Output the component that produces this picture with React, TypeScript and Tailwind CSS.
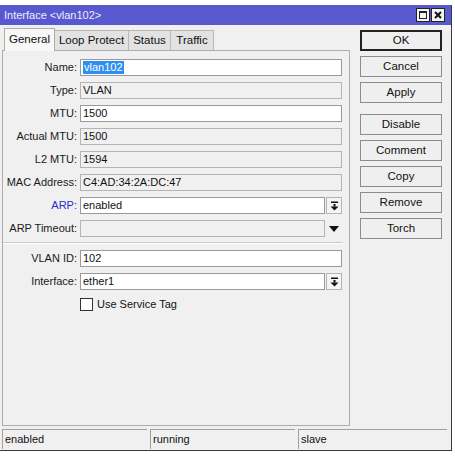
import React from 'react';

const font = { fontFamily: '"Liberation Sans", Arial, sans-serif' };

function DropIcon() {
  return (
    <svg width="9" height="10" viewBox="0 0 9 10" className="fill-[#111]">
      <rect x="1" y="0.5" width="7" height="1.5" />
      <rect x="3.5" y="3" width="2" height="2.5" />
      <polygon points="0.5,5.5 8.5,5.5 4.5,9.5" />
    </svg>
  );
}

function Field({
  label,
  value,
  editable,
  selected,
  blue,
  drop,
  arrow,
}: {
  label: string;
  value: string;
  editable?: boolean;
  selected?: boolean;
  blue?: boolean;
  drop?: boolean;
  arrow?: boolean;
}) {
  return (
    <div className="flex items-center h-[17px] mb-[6px]">
      <div className={`w-[77px] pr-[3px] text-right text-[11px] ${blue ? 'text-[#2b2bd0]' : 'text-[#1a1a1a]'}`}>
        {label}:
      </div>
      <div
        className={`h-[17px] flex items-center px-[2px] text-[11px] text-[#111] border ${
          editable ? 'bg-white border-[#9a9a9a]' : 'bg-[#f0f0f0] border-[#b4b4b4]'
        } ${drop || arrow ? 'w-[245px]' : 'w-[262px]'}`}
      >
        {selected ? <span className="bg-[#2f8ff0] text-white px-[1px] leading-[13px]">{value}</span> : value}
      </div>
      {drop && (
        <div className="ml-[1px] w-[16px] h-[17px] bg-[#f4f4f4] border border-[#b4b4b4] flex items-center justify-center">
          <DropIcon />
        </div>
      )}
      {arrow && (
        <div className="ml-[1px] w-[16px] h-[17px] flex items-center justify-center">
          <svg width="10" height="6" viewBox="0 0 10 6" className="fill-[#111]">
            <polygon points="0,0 10,0 5,6" />
          </svg>
        </div>
      )}
    </div>
  );
}

function Btn({ label, primary, extra }: { label: string; primary?: boolean; extra?: string }) {
  return (
    <div
      className={`w-[82px] h-[21px] flex items-center justify-center text-[11.5px] text-[#111] bg-[#efefef] ${
        primary ? 'border-2 border-[#222]' : 'border border-[#8c8c8c]'
      } ${extra ?? 'mb-[5px]'}`}
    >
      {label}
    </div>
  );
}

export default function App() {
  const tabs = [
    { name: 'Loop Protect', w: 'w-[75px]' },
    { name: 'Status', w: 'w-[43px]' },
    { name: 'Traffic', w: 'w-[44px]' },
  ];
  return (
    <div className="w-[455px] h-[456px] bg-white overflow-hidden" style={font}>
      <div className="h-[5px]" />
      <div className="w-[452px] h-[446px] flex flex-col bg-[#f0f0f0] border-r border-b border-[#3a3a3a]">
        {/* title bar */}
        <div className="h-[20px] bg-[#5858cf] flex items-center pl-[4px] pr-[6px]">
          <span className="text-[11px] text-[#eeeeff] flex-1">Interface &lt;vlan102&gt;</span>
          <div className="w-[14px] h-[14px] bg-[#f4f4f4] border border-[#222] flex items-center justify-center">
            <div className="w-[8px] h-[8px] border border-[#222] border-t-2" />
          </div>
          <div className="ml-[1px] w-[14px] h-[14px] bg-[#f4f4f4] border border-[#222] flex items-center justify-center">
            <svg width="8" height="8" viewBox="0 0 8 8" className="stroke-[#111]" strokeWidth="2">
              <path d="M1 1 L7 7 M7 1 L1 7" />
            </svg>
          </div>
        </div>

        {/* body */}
        <div className="flex pt-[3px]">
          <div className="ml-[2px] w-[348px]">
            <div className="flex items-end h-[22px] pl-[2px]">
              <div className="w-[51px] h-[23px] bg-[#f7f7f7] border border-b-0 border-[#adadad] flex items-center justify-center text-[11.5px] text-[#111] relative z-10 -mb-px">
                General
              </div>
              {tabs.map((t) => (
                <div
                  key={t.name}
                  className={`${t.w} h-[20px] bg-[#e2e2e2] border border-b-0 border-[#b8b8b8] -ml-px first:ml-0 flex items-center justify-center text-[11.5px] text-[#111]`}
                >
                  {t.name}
                </div>
              ))}
            </div>
            <div className="h-[376px] border border-[#adadad] bg-[#f0f0f0] pt-[8px]">
              <Field label="Name" value="vlan102" editable selected />
              <Field label="Type" value="VLAN" />
              <Field label="MTU" value="1500" editable />
              <Field label="Actual MTU" value="1500" />
              <Field label="L2 MTU" value="1594" />
              <Field label="MAC Address" value="C4:AD:34:2A:DC:47" />
              <Field label="ARP" value="enabled" editable blue drop />
              <Field label="ARP Timeout" value="" arrow />
              <div className="w-[340px] h-[2px] border-t border-[#c8c8c8] border-b border-b-white -mt-[1px] mb-[6px]" />
              <Field label="VLAN ID" value="102" editable />
              <Field label="Interface" value="ether1" editable drop />
              <div className="flex items-center h-[17px] pl-[77px] mt-[3px]">
                <div className="w-[13px] h-[13px] bg-white border border-[#333]" />
                <span className="ml-[4px] text-[11px] text-[#111]">Use Service Tag</span>
              </div>
            </div>
          </div>
          <div className="ml-[10px] pt-[2px]">
            <Btn label="OK" primary />
            <Btn label="Cancel" />
            <Btn label="Apply" extra="mb-[11px]" />
            <Btn label="Disable" />
            <Btn label="Comment" />
            <Btn label="Copy" />
            <Btn label="Remove" />
            <Btn label="Torch" />
          </div>
        </div>

        {/* status bar */}
        <div className="flex mt-[3px] ml-[2px] gap-[3px] h-[20px]">
          {['enabled', 'running', 'slave'].map((s, i) => (
            <div
              key={s}
              className={`${i === 2 ? 'w-[149px]' : 'w-[145px]'} h-[20px] border-t border-l border-[#9f9f9f] flex items-center pl-[2px] text-[11px] text-[#111]`}
            >
              {s}
            </div>
          ))}
        </div>
      </div>
    </div>
  );
}
